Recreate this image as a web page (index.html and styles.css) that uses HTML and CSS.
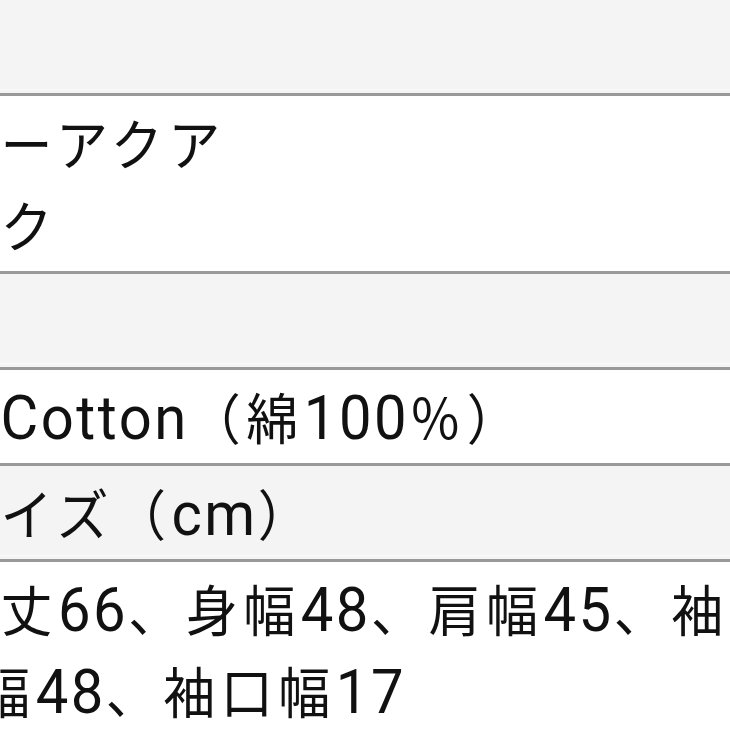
FILE: index.html
```html
<!DOCTYPE html>
<html lang="ja">
<head>
  <meta charset="UTF-8" />
  <meta name="viewport" content="width=device-width, initial-scale=1.0"/>
  <title>商品詳細</title>
  <link rel="stylesheet" href="styles.css">
</head>
<body>
  <div class="sheet">
    <div class="row head">
      <div class="line">カラー</div>
    </div>
    <div class="row">
      <div class="line">・ブルーアクア</div>
      <div class="line">ブラック</div>
    </div>
    <div class="row head">
      <div class="line">素材</div>
    </div>
    <div class="row">
      <div class="line">表地：<span class="latin">Cotton</span>（綿<span class="latin">100</span>％）</div>
    </div>
    <div class="row head">
      <div class="line">実寸サイズ（<span class="latin">cm</span>）</div>
    </div>
    <div class="row">
      <div class="line">Ｍ：着丈<span class="latin">66</span>、身幅<span class="latin">48</span>、肩幅<span class="latin">45</span>、袖丈<span class="latin">2</span></div>
      <div class="line"><span class="latin">5</span>、裾幅<span class="latin">48</span>、袖口幅<span class="latin">17</span></div>
    </div>
  </div>
</body>
</html>
```

FILE: styles.css
```css
* {
  margin: 0;
  padding: 0;
  box-sizing: border-box;
}

body {
  font-family: 'Noto Sans CJK JP', sans-serif;
  background: #fff;
  color: #111;
  overflow: hidden;
}

.sheet {
  margin-left: -172px;
  width: 1200px;
}

.row {
  background: #fff;
  border-bottom: 3px solid #999;
  padding: 5px 0 6px;
}

.row.head {
  background: #f4f4f4;
  box-shadow: inset 0 -3px 0 #f4f4f4, inset 0 -4px 0 #fafafa;
}

.line {
  height: 82px;
  font-size: 52px;
  letter-spacing: 5.5px;
  line-height: 82px;
  white-space: nowrap;
  text-spacing-trim: space-all;
  transform: scaleY(1.05);
}

.latin {
  font-family: Roboto, 'Noto Sans', sans-serif;
  font-size: 58px;
  letter-spacing: 2.5px;
}
```
